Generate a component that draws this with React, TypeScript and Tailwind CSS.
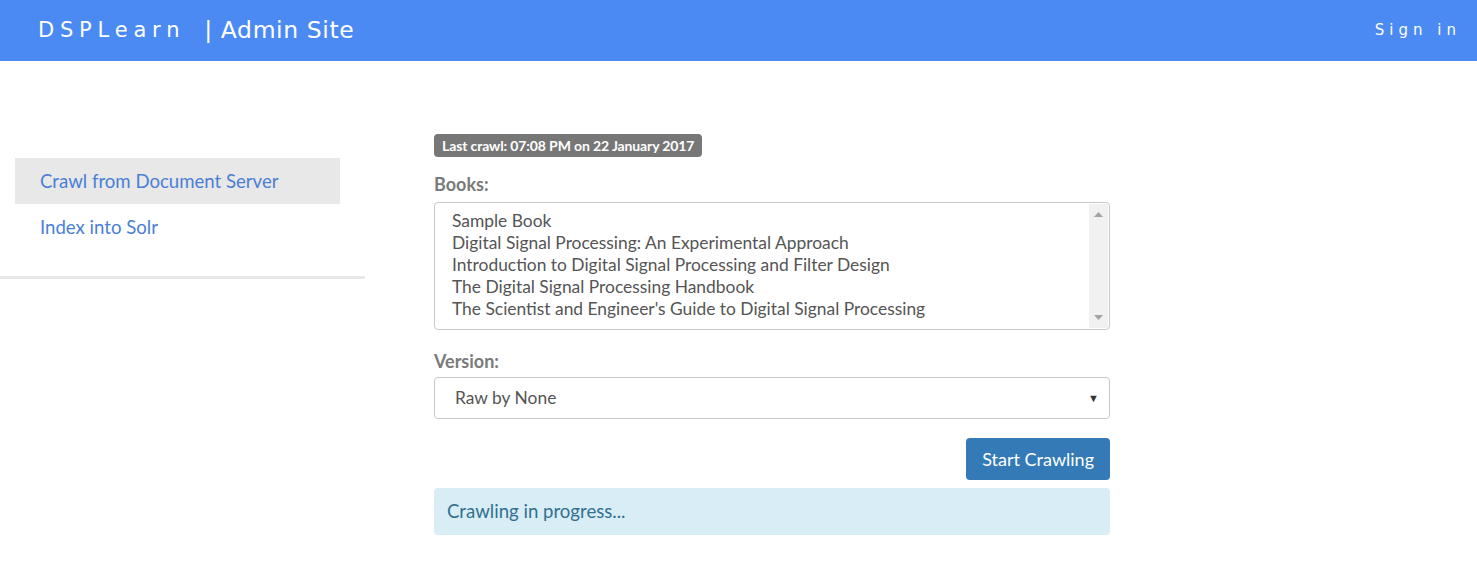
import React from "react";

const books = [
  "Sample Book",
  "Digital Signal Processing: An Experimental Approach",
  "Introduction to Digital Signal Processing and Filter Design",
  "The Digital Signal Processing Handbook",
  "The Scientist and Engineer's Guide to Digital Signal Processing",
];

const App = () => {
  return (
    <div className="min-h-[572px] bg-white font-['Lato','Open_Sans',sans-serif]">
      <header className="h-[61px] bg-[#4b8af3] flex items-center justify-between pl-[38px] pr-[16px] text-white font-['DejaVu_Sans','Open_Sans',sans-serif]">
        <div className="flex items-center">
          <span className="text-[21px] tracking-[5.8px]">DSPLearn</span>
          <span className="ml-[19px] text-[23.5px] tracking-[0.6px]">| Admin Site</span>
        </div>
        <span className="text-[15px] tracking-[5px]">Sign in</span>
      </header>

      <div className="flex pt-[71px]">
        <aside className="w-[365px] shrink-0 pt-[3px]">
          <nav className="pl-[15px] pr-[25px] pt-[23px] pb-[25px]">
            <a className="block h-[46px] leading-[46px] pl-[25px] bg-[#e8e8e8] text-[18.6px] text-[#4a7fd6]">
              Crawl from Document Server
            </a>
            <a className="block h-[47px] leading-[47px] pl-[25px] text-[18.6px] text-[#4a7fd6]">
              Index into Solr
            </a>
          </nav>
          <div className="h-[3px] bg-[#e8e8e8]" />
        </aside>

        <main className="ml-[69px] mt-[1px] w-[676px]">
          <span className="inline-block h-[23px] leading-[23px] px-[8px] rounded-[4px] bg-[#777] text-white text-[14px] font-bold tracking-[-0.12px]">
            Last crawl: 07:08 PM on 22 January 2017
          </span>

          <div className="mt-[16px] text-[18px] font-bold text-[#7a7a7a] leading-[22px]">Books:</div>
          <div className="mt-[7px] h-[128px] flex border border-[#c8c8c8] rounded-[4px] overflow-hidden">
            <div className="flex-1 pl-[17px] pt-[7px] text-[17.4px] text-[#555] leading-[22px]">
              {books.map((b) => (
                <div key={b}>{b}</div>
              ))}
            </div>
            <div className="w-[19px] mr-[1px] my-[1px] bg-[#f1f1f1] flex flex-col items-center justify-between py-[8px]">
              <svg width="9" height="5" viewBox="0 0 9 5">
                <path d="M0 5 L4.5 0 L9 5 Z" fill="#a3a3a3" />
              </svg>
              <svg width="9" height="5" viewBox="0 0 9 5">
                <path d="M0 0 L4.5 5 L9 0 Z" fill="#a3a3a3" />
              </svg>
            </div>
          </div>

          <div className="mt-[20px] text-[18px] font-bold text-[#7a7a7a] leading-[22px]">Version:</div>
          <div className="mt-[5px] h-[42px] flex items-center justify-between border border-[#c8c8c8] rounded-[4px] pl-[20px] pr-[10px] text-[17.4px] text-[#555]">
            <span>Raw by None</span>
            <span className="text-[11px] text-[#333]">▼</span>
          </div>

          <div className="mt-[19px] flex justify-end">
            <button className="h-[42px] px-[16px] rounded-[4px] bg-[#337ab7] text-white text-[18px]">
              Start Crawling
            </button>
          </div>

          <div className="mt-[8px] h-[47px] flex items-center pl-[13px] rounded-[4px] bg-[#d9edf7] text-[#31708f] text-[18.6px]">
            Crawling in progress...
          </div>
        </main>
      </div>
    </div>
  );
};

export default App;
